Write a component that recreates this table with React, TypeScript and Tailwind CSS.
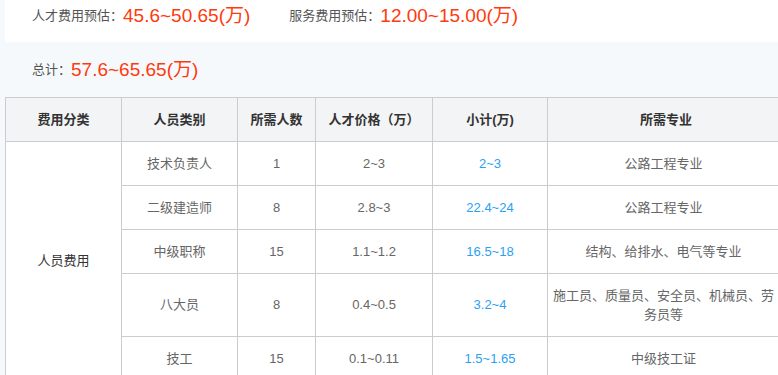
const rows = [
  { role: '技术负责人', count: '1', price: '2~3', subtotal: '2~3', major: '公路工程专业' },
  { role: '二级建造师', count: '8', price: '2.8~3', subtotal: '22.4~24', major: '公路工程专业' },
  { role: '中级职称', count: '15', price: '1.1~1.2', subtotal: '16.5~18', major: '结构、给排水、电气等专业' },
  { role: '八大员', count: '8', price: '0.4~0.5', subtotal: '3.2~4', major: '施工员、质量员、安全员、机械员、劳务员等', tall: true },
  { role: '技工', count: '15', price: '0.1~0.11', subtotal: '1.5~1.65', major: '中级技工证' },
];

const headers = ['费用分类', '人员类别', '所需人数', '人才价格（万）', '小计(万)', '所需专业'];

export default function App() {
  return (
    <div
      className="h-[375px] w-[778px] overflow-hidden bg-[#f5f9fc] pl-[5px] text-[13px] text-[#666]"
      style={{ fontFamily: '"Liberation Sans", "Noto Sans CJK SC", sans-serif' }}
    >
      <div className="flex h-[42px] items-start bg-white pl-[27px] pt-[4px]">
        <div className="flex h-[24px] items-center">
          <span className="text-[#555]">人才费用预估：</span>
          <span className="text-[19px] text-[#ff3a0d]">45.6~50.65(万)</span>
        </div>
        <div className="ml-[39px] flex h-[24px] items-center">
          <span className="text-[#555]">服务费用预估：</span>
          <span className="text-[19px] text-[#ff3a0d]">12.00~15.00(万)</span>
        </div>
      </div>

      <div className="mt-[16px] flex h-[24px] items-center pl-[27px]">
        <span className="text-[#555]">总计：</span>
        <span className="text-[19px] text-[#ff3a0d]">57.6~65.65(万)</span>
      </div>

      <table className="mt-[15px] w-[779px] table-fixed border-collapse bg-white text-center">
        <colgroup>
          <col className="w-[116px]" />
          <col className="w-[116px]" />
          <col className="w-[78px]" />
          <col className="w-[117px]" />
          <col className="w-[115px]" />
          <col className="w-[237px]" />
        </colgroup>
        <thead>
          <tr className="h-[44px] bg-[#f3f4f6]">
            {headers.map((h) => (
              <th key={h} className="border border-[#cccccc] px-[5px] font-bold text-[#333]">
                {h}
              </th>
            ))}
          </tr>
        </thead>
        <tbody>
          {rows.map((r, i) => (
            <tr key={r.role} className={r.tall ? 'h-[63px]' : 'h-[44px]'}>
              {i === 0 && (
                <td rowSpan={rows.length} className="border border-[#cccccc] text-[#333]">
                  人员费用
                </td>
              )}
              <td className="border border-[#cccccc]">{r.role}</td>
              <td className="border border-[#cccccc]">{r.count}</td>
              <td className="border border-[#cccccc]">{r.price}</td>
              <td className="border border-[#cccccc] text-[#2a9ff5]">{r.subtotal}</td>
              <td className="border border-[#cccccc] pl-[5px] pr-[10px] leading-[19px]">{r.major}</td>
            </tr>
          ))}
        </tbody>
      </table>
    </div>
  );
}
